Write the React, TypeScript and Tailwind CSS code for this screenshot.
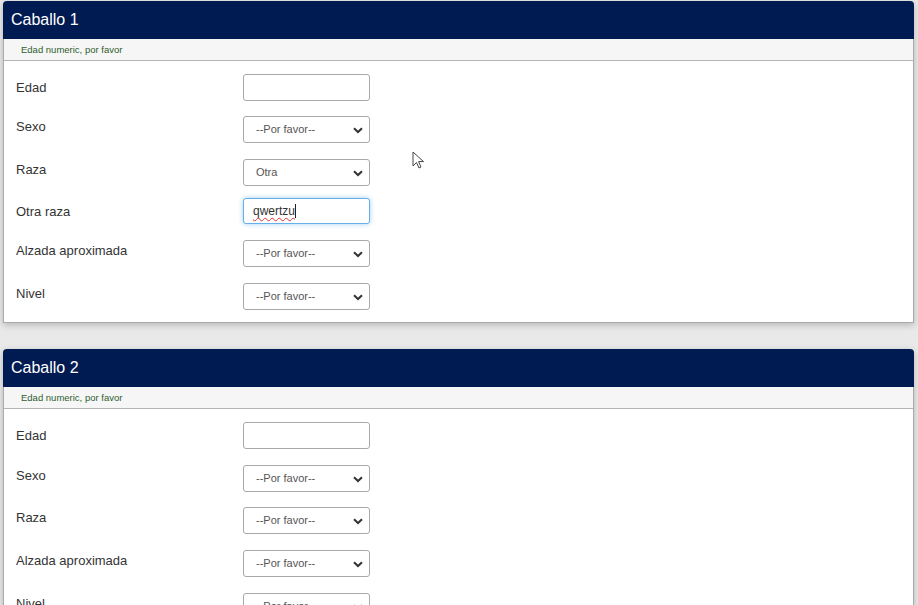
import React from 'react'

type Field = {
  label: string
  kind: 'input' | 'select' | 'focused'
  value?: string
  h: number
}

const horse1: Field[] = [
  { label: 'Edad', kind: 'input', h: 42 },
  { label: 'Sexo', kind: 'select', value: '--Por favor--', h: 43 },
  { label: 'Raza', kind: 'select', value: 'Otra', h: 39 },
  { label: 'Otra raza', kind: 'focused', value: 'qwertzu', h: 42 },
  { label: 'Alzada aproximada', kind: 'select', value: '--Por favor--', h: 43 },
  { label: 'Nivel', kind: 'select', value: '--Por favor--', h: 27 },
]

const horse2: Field[] = [
  { label: 'Edad', kind: 'input', h: 43 },
  { label: 'Sexo', kind: 'select', value: '--Por favor--', h: 42 },
  { label: 'Raza', kind: 'select', value: '--Por favor--', h: 43 },
  { label: 'Alzada aproximada', kind: 'select', value: '--Por favor--', h: 43 },
  { label: 'Nivel', kind: 'select', value: '--Por favor--', h: 27 },
]

function Chevron() {
  return (
    <svg width="10" height="7" viewBox="0 0 10 7" className="absolute right-[6px] top-[10px]">
      <path d="M1 1.2 L5 5 L9 1.2" fill="none" stroke="#333" strokeWidth="2" />
    </svg>
  )
}

function Control({ field }: { field: Field }) {
  if (field.kind === 'input') {
    return <div className="w-[127px] h-[27px] rounded-[3px] border border-[#a9a9a9] bg-white" />
  }
  if (field.kind === 'focused') {
    return (
      <div className="w-[127px] h-[26px] rounded-[3px] border border-[#66afe9] bg-white shadow-[0_0_5px_rgba(102,175,233,0.6)] flex items-center pl-[9px] text-[12px] text-[#333]">
        <span className="underline decoration-wavy decoration-[#e03030] decoration-[1px] underline-offset-[2px]">
          {field.value}
        </span>
        <span className="w-px h-[14px] bg-[#222]" />
      </div>
    )
  }
  return (
    <div className="relative w-[127px] h-[27px] rounded-[3px] border border-[#a9a9a9] bg-white flex items-center pl-[12px] text-[11px] text-[#555]">
      {field.value}
      <Chevron />
    </div>
  )
}

function HorseCard({ title, fields }: { title: string; fields: Field[] }) {
  return (
    <div className="rounded-t-[4px] border border-t-0 border-[#aaaaaa] bg-white shadow-[0_2px_7px_rgba(0,0,0,0.22)]">
      <div className="h-[38px] -mx-px bg-[#001a52] rounded-t-[4px] flex items-center px-[8px] text-[16px] text-white">
        {title}
      </div>
      <div className="h-[22px] bg-[#f6f6f6] border-b border-[#b5b5b5] flex items-center pl-[17px] pt-[2px] text-[9.5px] text-[#2f5e2f]">
        Edad numeric, por favor
      </div>
      <div className="pt-[13px] pb-[12px] px-[12px]">
        {fields.map((f) => (
          <div key={f.label} className="flex" style={{ height: f.h }}>
            <div
              className={`w-[227px] text-[13px] leading-[18px] text-[#333] ${
                f.kind === 'select' ? 'pt-[2px]' : 'pt-[5px]'
              }`}
            >
              {f.label}
            </div>
            <Control field={f} />
          </div>
        ))}
      </div>
    </div>
  )
}

export default function App() {
  return (
    <div
      className="relative h-[605px] w-[918px] overflow-hidden bg-[#e9e9e9]"
      style={{ fontFamily: '"Liberation Sans", Arial, sans-serif' }}
    >
      <div className="flex flex-col gap-[26px] pt-px pl-[3px] pr-[4px]">
        <HorseCard title="Caballo 1" fields={horse1} />
        <HorseCard title="Caballo 2" fields={horse2} />
      </div>
      <svg
        width="14"
        height="20"
        viewBox="0 0 14 20"
        className="absolute left-[412px] top-[151px]"
      >
        <path
          d="M1 1 L1 15 L4.5 11.5 L7 17 L9 16 L6.6 10.6 L11.5 10.6 Z"
          fill="white"
          stroke="#444"
          strokeWidth="1"
          strokeLinejoin="round"
        />
      </svg>
    </div>
  )
}
